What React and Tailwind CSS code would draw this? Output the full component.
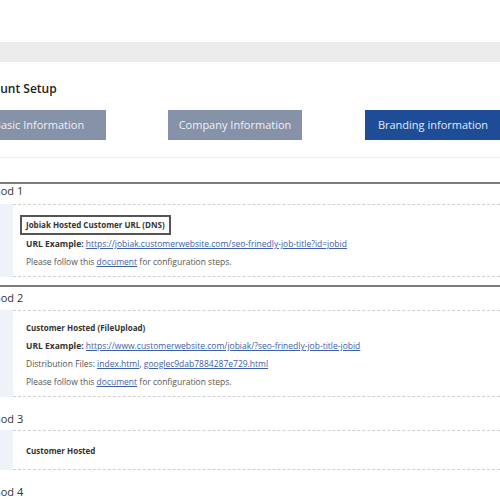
import React from 'react';

const link = 'text-[#3d5ea8] underline';

function Line({ children, size = 'text-[8.5px]' }) {
    return <div className={`pl-[13px] h-[18px] leading-[18px] ${size} text-[#555] whitespace-nowrap`}>{children}</div>;
}

export default function App() {
    return (
        <div className="w-[500px] h-[500px] overflow-hidden bg-white font-['Open_Sans',sans-serif] text-[#333]">
            <div className="h-[42px]" />
            <div className="h-[20px] bg-[#ececec]" />

            <div className="ml-[-40px] w-[560px]">
                {/* Heading */}
                <h2 className="mt-[19px] pl-[13px] h-[16px] leading-[16px] text-[12px] font-semibold text-[#222]">Account Setup</h2>

                {/* Tabs */}
                <div className="mt-[13px] pl-[12px] flex">
                    <div className="w-[134px] h-[30px] flex items-center justify-center bg-[#8692a8] text-[#eef1f6] text-[11px]">Basic Information</div>
                    <div className="ml-[62px] w-[134px] h-[30px] flex items-center justify-center bg-[#8692a8] text-[#eef1f6] text-[11px]">Company Information</div>
                    <div className="ml-[63px] w-[136px] h-[30px] flex items-center justify-center bg-[#1f4c97] text-[#e4eaf5] text-[11px]">Branding information</div>
                </div>

                <div className="mt-[17px] h-[1px] bg-[#eeeeee]" />

                {/* Method 1 (selected) */}
                <section className="mt-[24px] border-2 border-r-0 border-[#7b7b7b] pb-[8px]">
                    <div className="pl-[12px] h-[14px] leading-[14px] text-[11px]">Method 1</div>
                    <div className="mt-[6px] flex">
                        <div className="w-[51px] bg-[#eef2f9]" />
                        <div className="flex-1 border-y border-dashed border-[#d0d0d0] pt-[5px] pb-[5px]">
                            <div className="ml-[7px] inline-block h-[20px] border-2 border-[#555] px-[4px] leading-[16px] text-[8px] font-bold text-[#333]">
                                Jobiak Hosted Customer URL (DNS)
                            </div>
                            <Line>
                                <b className="text-[#333]">URL Example:</b>{' '}
                                <a className={link}>https://jobiak.customerwebsite.com/seo-frinedly-job-title?id=jobid</a>
                            </Line>
                            <Line>
                                Please follow this <a className={link}>document</a> for configuration steps.
                            </Line>
                        </div>
                    </div>
                </section>

                {/* Method 2 */}
                <section className="border-l-2 border-transparent">
                    <div className="pt-[4px] pl-[12px] h-[18px] leading-[14px] text-[11px]">Method 2</div>
                    <div className="mt-[5px] flex">
                        <div className="w-[51px] bg-[#eef2f9]" />
                        <div className="flex-1 border-y border-dashed border-[#d0d0d0] pt-[8px] pb-[5px]">
                            <Line size="text-[8px]"><b className="text-[#333]">Customer Hosted (FileUpload)</b></Line>
                            <Line>
                                <b className="text-[#333]">URL Example:</b>{' '}
                                <a className={link}>https://www.customerwebsite.com/jobiak/?seo-frinedly-job-title-jobid</a>
                            </Line>
                            <Line>
                                Distribution Files: <a className={link}>index.html</a>,{' '}
                                <a className={link}>googlec9dab7884287e729.html</a>
                            </Line>
                            <Line>
                                Please follow this <a className={link}>document</a> for configuration steps.
                            </Line>
                        </div>
                    </div>
                </section>

                {/* Method 3 */}
                <section className="border-l-2 border-transparent">
                    <div className="pt-[15px] pl-[12px] h-[29px] leading-[14px] text-[11px]">Method 3</div>
                    <div className="mt-[4px] flex">
                        <div className="w-[51px] bg-[#eef2f9]" />
                        <div className="flex-1 border-y border-dashed border-[#d0d0d0] pt-[11px] pb-[9px]">
                            <Line size="text-[8px]"><b className="text-[#333]">Customer Hosted</b></Line>
                        </div>
                    </div>
                </section>

                {/* Method 4 */}
                <section className="border-l-2 border-transparent">
                    <div className="pt-[15px] pl-[12px] h-[29px] leading-[14px] text-[11px]">Method 4</div>
                </section>
            </div>
        </div>
    );
}
